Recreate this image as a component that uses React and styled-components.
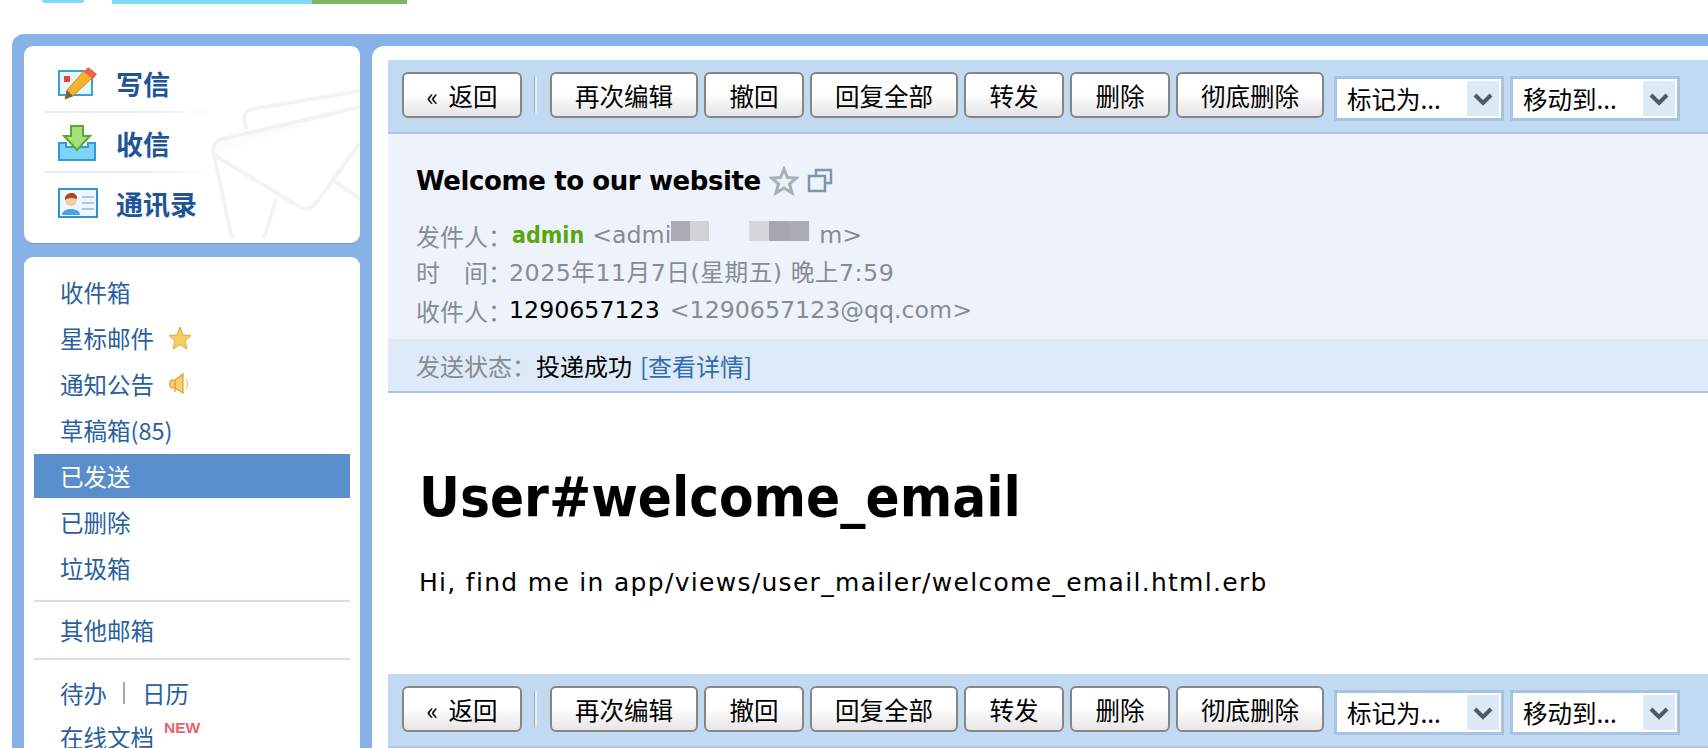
import React from "react";
import styled, { createGlobalStyle } from "styled-components";

const GlobalStyle = createGlobalStyle`
  html, body {
    margin: 0;
    padding: 0;
    background: #fff;
    overflow: hidden;
  }
  body {
    font-family: "DejaVu Sans", "Noto Sans CJK SC", sans-serif;
  }
`;

const cjk = `"Noto Sans CJK SC", "DejaVu Sans", sans-serif`;

const actions = [
  { label: "再次编辑", width: 148 },
  { label: "撤回", width: 100 },
  { label: "回复全部", width: 148 },
  { label: "转发", width: 100 },
  { label: "删除", width: 100 },
  { label: "彻底删除", width: 148 },
];

const folders = [
  { label: "收件箱" },
  { label: "星标邮件", icon: "star" },
  { label: "通知公告", icon: "horn" },
  { label: "草稿箱(85)" },
  { label: "已发送", active: true },
  { label: "已删除" },
  { label: "垃圾箱" },
];

const WriteIcon = () => (
  <svg width="40" height="34" viewBox="0 0 40 34">
    <rect x="1" y="5" width="33" height="24" fill="#e8f5fd" stroke="#3b9fd8" strokeWidth="2" />
    <rect x="6" y="10" width="6" height="6" fill="#e8452c" />
    <path d="M26 5 L34 12 L15 30 L7 33 L9 24 Z" fill="#f6b12d" stroke="#d98a14" />
    <path d="M30 1 L39 8 L35 13 L26 6 Z" fill="#e8654a" />
    <path d="M9 24 L15 30 L7 33 Z" fill="#6b6258" />
  </svg>
);

const InboxIcon = () => (
  <svg width="38" height="36" viewBox="0 0 38 36">
    <path d="M1 18 H8 V22 H30 V18 H37 V35 H1 Z" fill="#7fd3f5" stroke="#2f9bd8" strokeWidth="2" />
    <path d="M13 1 H25 V11 H32 L19 25 L6 11 H13 Z" fill="#a6e07a" stroke="#5aa82e" strokeWidth="2" />
  </svg>
);

const ContactIcon = () => (
  <svg width="40" height="30" viewBox="0 0 40 30">
    <rect x="1" y="1" width="38" height="28" fill="#eef7fd" stroke="#2f95d2" strokeWidth="2" />
    <rect x="24" y="8" width="12" height="2" fill="#a5cbe6" />
    <rect x="24" y="14" width="12" height="2" fill="#a5cbe6" />
    <rect x="24" y="20" width="12" height="2" fill="#a5cbe6" />
    <path d="M4 27 C4 19 22 19 22 27 Z" fill="#4f9fe0" />
    <circle cx="13" cy="12" r="6" fill="#f4c9a4" />
    <path d="M7 12 C6 3 20 3 19 11 C15 10 11 9 7 12 Z" fill="#a8491f" />
  </svg>
);

const StarIcon = () => (
  <svg width="24" height="24" viewBox="0 0 24 24">
    <path d="M12 1 L15 9 L23 9.500 L17 15 L19 23 L12 18.500 L5 23 L7 15 L1 9.500 L9 9 Z" fill="#f8cf5c" stroke="#e8a23a" strokeWidth="1" />
  </svg>
);

const HornIcon = () => (
  <svg width="22" height="22" viewBox="0 0 22 22">
    <path d="M15 1 V20 L7 15 H4 C1 15 1 7 4 7 H7 Z" fill="#f8cf6a" stroke="#e59a33" strokeWidth="1.200" />
    <path d="M7 7 V19" stroke="#e59a33" strokeWidth="1.200" />
    <path d="M18 6 C20 9 20 13 18 16" fill="none" stroke="#eeb565" strokeWidth="1" />
  </svg>
);

const Envelope = () => (
  <svg width="150" height="150" viewBox="0 0 150 150">
    <g fill="none" stroke="#f0f3f8" strokeWidth="4" strokeLinejoin="round">
      <path d="M36 40 L34 30 Q34 22 42 20 L150 2" />
      <path d="M4 66 Q0 54 12 50 L150 18" fill="#fbfcfd" />
      <path d="M4 66 L22 150" />
      <path d="M4 66 L90 118 Q100 122 106 114 L150 54" />
      <path d="M66 110 L54 150" />
      <path d="M124 92 L150 110" />
    </g>
  </svg>
);

const Chevron = () => (
  <svg width="20" height="14" viewBox="0 0 20 14">
    <path d="M2 3 L10 11 L18 3" fill="none" stroke="#4f5a64" strokeWidth="4" />
  </svg>
);

const Toolbar = () => (
  <ToolbarBar>
    <ToolButton $width={120}>{"«\u00a0\u2009返回"}</ToolButton>
    <ToolSep />
    {actions.map((a) => (
      <ToolButton key={a.label} $width={a.width}>{a.label}</ToolButton>
    ))}
    <SelectBox>
      <SelectText>标记为...</SelectText>
      <SelectArrow><Chevron /></SelectArrow>
    </SelectBox>
    <SelectBox>
      <SelectText>移动到...</SelectText>
      <SelectArrow><Chevron /></SelectArrow>
    </SelectBox>
  </ToolbarBar>
);

const App = () => {
  return (
    <>
      <GlobalStyle />
      <Page>
        <TopBar>
          <LogoArc />
          <LogoStrip>
            <LogoCyan />
            <LogoGreen />
          </LogoStrip>
        </TopBar>
        <Frame>
          <Side>
            <NavCard>
              <EnvelopeWrap><Envelope /></EnvelopeWrap>
              <NavRow><NavIcon><WriteIcon /></NavIcon>写信</NavRow>
              <NavRow><NavIcon><InboxIcon /></NavIcon>收信</NavRow>
              <NavRow $last><NavIcon><ContactIcon /></NavIcon>通讯录</NavRow>
            </NavCard>
            <FolderCard>
              {folders.map((f) => (
                <FolderRow key={f.label} $active={f.active}>
                  {f.label}
                  {f.icon === "star" && <RowIcon><StarIcon /></RowIcon>}
                  {f.icon === "horn" && <RowIcon><HornIcon /></RowIcon>}
                </FolderRow>
              ))}
              <SideRule $top={10} />
              <FolderRow $tall>其他邮箱</FolderRow>
              <SideRule />
              <CalendarRow>待办<Pipe />日历</CalendarRow>
              <FolderRow>在线文档<NewBadge>NEW</NewBadge></FolderRow>
            </FolderCard>
          </Side>
          <Main>
            <Toolbar />
            <MailHead>
              <Subject>
                Welcome to our website
                <SubjectIcons>
                  <svg width="30" height="30" viewBox="0 0 30 30">
                    <path d="M15 3 L18.500 11.500 L27.500 12 L20.500 18 L23 27 L15 22 L7 27 L9.500 18 L2.500 12 L11.500 11.500 Z" fill="#eef0f0" stroke="#a5b0bb" strokeWidth="3" />
                  </svg>
                  <svg width="26" height="26" viewBox="0 0 26 26">
                    <path d="M9 7 V2 H24 V15 H18" fill="none" stroke="#7f95ab" strokeWidth="2.500" />
                    <rect x="2" y="8" width="16" height="15" fill="none" stroke="#7f95ab" strokeWidth="2.500" />
                  </svg>
                </SubjectIcons>
              </Subject>
              <MetaRow $top={19}>
                <MetaLabel>发件人：</MetaLabel>
                <Sender>admin</Sender>
                <span>&lt;admi</span>
                <Mosaic $width={38} $tone="linear-gradient(90deg,#a9adb3 0 50%,#cfd2d6 50%)" />
                <Mosaic $width={40} $tone="transparent" />
                <Mosaic $width={60} $tone="linear-gradient(90deg,#d3d6da 0 33%,#a5a9af 33% 66%,#a9adb3 66%)" />
                <MosaicTail>m&gt;</MosaicTail>
              </MetaRow>
              <MetaRow $top={0}>
                <MetaLabel>时　间：</MetaLabel>
                <DateText>2025年11月7日(星期五) 晚上7:59</DateText>
              </MetaRow>
              <MetaRow $top={3}>
                <MetaLabel>收件人：</MetaLabel>
                <Receiver>1290657123</Receiver>
                <span>&lt;1290657123@qq.com&gt;</span>
              </MetaRow>
            </MailHead>
            <StatusBar>
              <StatusLabel>发送状态：</StatusLabel>
              <StatusValue>投递成功</StatusValue>
              <StatusLink>[查看详情]</StatusLink>
            </StatusBar>
            <MailBody>
              <BodyTitle>User#welcome_email</BodyTitle>
              <BodyText>Hi, find me in app/views/user_mailer/welcome_email.html.erb</BodyText>
            </MailBody>
            <Toolbar />
          </Main>
        </Frame>
      </Page>
    </>
  );
};

const Page = styled.div`
  width: 1708px;
  height: 748px;
  overflow: hidden;
  display: flex;
  flex-direction: column;
`;

const TopBar = styled.div`
  height: 34px;
  display: flex;
  align-items: flex-start;
  padding-left: 42px;
`;

const LogoArc = styled.div`
  width: 42px;
  height: 3px;
  background: #7fd8f4;
  border-radius: 0 0 21px 21px;
`;

const LogoStrip = styled.div`
  display: flex;
  height: 4px;
  margin-left: 28px;
`;

const LogoCyan = styled.div`
  width: 200px;
  background: #7fdcf5;
`;

const LogoGreen = styled.div`
  width: 95px;
  background: #80b565;
`;

const Frame = styled.div`
  flex: 1;
  min-height: 0;
  margin-left: 12px;
  background: #88b2e6;
  border-radius: 12px 0 0 0;
  padding: 12px 0 0 12px;
  display: flex;
  gap: 12px;
`;

const Side = styled.div`
  width: 336px;
  flex: none;
  display: flex;
  flex-direction: column;
  gap: 14px;
`;

const NavCard = styled.div`
  position: relative;
  overflow: hidden;
  height: 197px;
  box-sizing: border-box;
  background: #fff;
  border-radius: 9px;
  box-shadow: 0 1px 0 #6d9ad6;
  padding: 7px 20px 0;
`;

const EnvelopeWrap = styled.div`
  position: absolute;
  right: 0;
  bottom: 0;
`;

const NavRow = styled.div`
  position: relative;
  width: 180px;
  height: 60px;
  display: flex;
  align-items: center;
  font-family: ${cjk};
  font-size: 27px;
  font-weight: 700;
  color: #1f5596;
  &::after {
    content: "";
    display: ${(p) => (p.$last ? "none" : "block")};
    position: absolute;
    left: 0;
    right: 0;
    bottom: 0;
    height: 2px;
    background: linear-gradient(90deg, #e6edf7 50%, rgba(230, 237, 247, 0));
  }
`;

const NavIcon = styled.span`
  width: 72px;
  padding-left: 14px;
  box-sizing: border-box;
  display: flex;
  align-items: center;
`;

const FolderCard = styled.div`
  flex: 1;
  background: #fff;
  border-radius: 9px 9px 0 0;
  padding: 13px 10px 0;
  overflow: hidden;
`;

const FolderRow = styled.div`
  height: ${(p) => (p.$tall ? 56 : 44)}px;
  margin-bottom: ${(p) => (p.$tall ? 0 : 2)}px;
  display: flex;
  align-items: center;
  padding-left: 26px;
  font-family: ${cjk};
  font-size: 23.500px;
  color: ${(p) => (p.$active ? "#fff" : "#2a5f9e")};
  background: ${(p) => (p.$active ? "#5a8dcc" : "transparent")};
`;

const CalendarRow = styled(FolderRow)`
  margin-top: 11px;
  margin-bottom: 0;
`;

const RowIcon = styled.span`
  display: inline-flex;
  margin-left: 14px;
`;

const Pipe = styled.span`
  width: 2px;
  height: 22px;
  background: #aaa;
  margin: 0 17px 0 16px;
`;

const NewBadge = styled.sup`
  font-family: "Liberation Sans", sans-serif;
  font-size: 15.500px;
  font-weight: 700;
  color: #ea6470;
  margin: -19px 0 0 10px;
`;

const SideRule = styled.div`
  height: 2px;
  margin-top: ${(p) => p.$top || 0}px;
  background: #d5dcea;
`;

const Main = styled.div`
  flex: 1;
  min-width: 0;
  background: #fff;
  border-radius: 12px 0 0 0;
  padding: 14px 0 0 16px;
  display: flex;
  flex-direction: column;
`;

const ToolbarBar = styled.div`
  flex: none;
  height: 74px;
  box-sizing: border-box;
  background: #c1d9f1;
  border-bottom: 2px solid #a9c6e4;
  padding: 12px 0 0 14px;
  display: flex;
  align-items: flex-start;
  gap: 6px;
`;

const ToolButton = styled.div`
  width: ${(p) => p.$width}px;
  height: 46px;
  box-sizing: border-box;
  display: flex;
  align-items: center;
  justify-content: center;
  border: 2px solid #868686;
  border-radius: 6px;
  background: linear-gradient(#ffffff, #ffffff 45%, #e6e6e6);
  font-family: ${cjk};
  font-size: 24.500px;
  color: #000;
`;

const ToolSep = styled.div`
  width: 3px;
  height: 36px;
  margin: 5px 7px 0 6px;
  background: #e8eef6;
  border-left: 1px solid #a0a8b0;
  box-sizing: border-box;
`;

const SelectBox = styled.div`
  width: 170px;
  height: 45px;
  margin: 4px 0 0 4px;
  box-sizing: border-box;
  border: 3px solid #a5c4e3;
  background: #fff;
  display: flex;
  justify-content: space-between;
  padding: 2px;
  & + & {
    margin-left: 0;
  }
`;

const SelectText = styled.span`
  font-family: ${cjk};
  font-size: 24.500px;
  line-height: 36px;
  padding-left: 8px;
  color: #000;
`;

const SelectArrow = styled.span`
  width: 32px;
  background: #dde9f6;
  display: flex;
  align-items: center;
  justify-content: center;
`;

const MailHead = styled.div`
  flex: none;
  height: 205px;
  box-sizing: border-box;
  background: #eef3fb;
  padding: 30px 0 0 28px;
`;

const Subject = styled.div`
  display: flex;
  align-items: center;
  height: 34px;
  font-size: 26px;
  font-weight: 700;
  letter-spacing: -0.400px;
  color: #000;
`;

const SubjectIcons = styled.span`
  display: inline-flex;
  align-items: center;
  gap: 8px;
  margin-left: 8px;
`;

const MetaRow = styled.div`
  display: flex;
  align-items: center;
  height: 36px;
  margin-top: ${(p) => p.$top}px;
  font-size: 23.700px;
  color: #868c94;
  white-space: pre;
`;

const MetaLabel = styled.span`
  font-family: ${cjk};
  width: 93px;
  font-size: 24px;
`;

const Sender = styled.b`
  font-family: "DejaVu Sans Condensed", "DejaVu Sans", sans-serif;
  font-size: 23px;
  color: #5aa60e;
  margin: 0 8px 0 3px;
`;

const DateText = styled.span`
  letter-spacing: 0.500px;
`;

const Receiver = styled.span`
  color: #000;
  margin-right: 10px;
`;

const Mosaic = styled.span`
  width: ${(p) => p.$width}px;
  height: 20px;
  margin-top: -8px;
  background: ${(p) => p.$tone};
`;

const MosaicTail = styled.span`
  margin-left: 10px;
`;

const StatusBar = styled.div`
  flex: none;
  height: 54px;
  box-sizing: border-box;
  background: #deeaf7;
  border-bottom: 2px solid #a9c6e4;
  padding-left: 28px;
  display: flex;
  align-items: center;
  font-family: ${cjk};
  font-size: 24px;
`;

const StatusLabel = styled.span`
  color: #868c94;
  width: 120px;
`;

const StatusValue = styled.span`
  color: #000;
  margin-right: 8px;
`;

const StatusLink = styled.span`
  color: #2f6db0;
`;

const MailBody = styled.div`
  flex: none;
  height: 281px;
  box-sizing: border-box;
  padding: 72px 0 0 31px;
`;

const BodyTitle = styled.div`
  font-family: "DejaVu Sans Condensed", "DejaVu Sans", sans-serif;
  font-size: 56px;
  line-height: 64px;
  font-weight: 700;
  color: #000;
`;

const BodyText = styled.div`
  margin-top: 36px;
  font-size: 25px;
  line-height: 36px;
  letter-spacing: 1.300px;
  color: #000;
`;

export default App;
